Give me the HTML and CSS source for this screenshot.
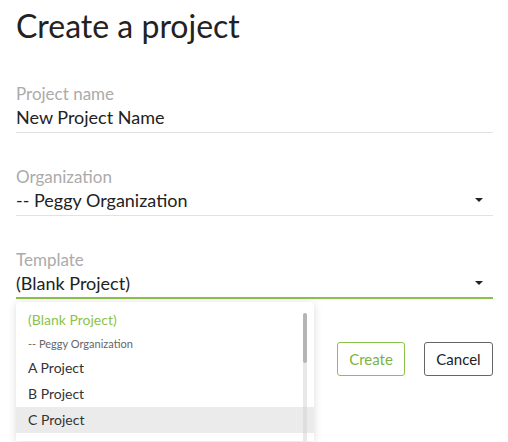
FILE: index.html
```html
<!DOCTYPE html>
<html lang="en">
<head>
<meta charset="UTF-8">
<meta name="viewport" content="width=device-width, initial-scale=1.0">
<title>Create a project</title>
<link rel="stylesheet" href="styles.css">
</head>
<body>

<div class="page">
    <h1>Create a project</h1>

    <div class="field">
        <label>Project name</label>
        <div class="value">New Project Name</div>
    </div>

    <div class="field">
        <label>Organization</label>
        <div class="value">
            <span>-- Peggy Organization</span>
            <span class="caret"></span>
        </div>
    </div>

    <div class="field focused">
        <label>Template</label>
        <div class="value">
            <span>(Blank Project)</span>
            <span class="caret"></span>
        </div>

        <div class="menu">
            <div class="menu-item selected">(Blank Project)</div>
            <div class="menu-group">-- Peggy Organization</div>
            <div class="menu-item">A Project</div>
            <div class="menu-item">B Project</div>
            <div class="menu-item hover">C Project</div>
            <div class="menu-item">Charity Run 2018</div>
            <div class="scrollbar"><div class="thumb"></div></div>
        </div>
    </div>

    <div class="actions">
        <button class="btn primary">Create</button>
        <button class="btn cancel">Cancel</button>
    </div>
</div>

</body>
</html>
```

FILE: styles.css
```css
html, body {
    height: 100%;
}
body {
    font-family: Lato, 'Open Sans', sans-serif;
    margin: 0;
    padding: 0;
    overflow: hidden;
    background-color: #fff;
    color: #222;
}
.page {
    height: 100%;
    padding: 0 15px 0 16px;
}
h1 {
    margin: 0;
    padding-top: 6px;
    font-size: 32px;
    font-weight: 400;
    line-height: 40px;
    color: #222;
}
.field {
    position: relative;
    margin-top: 33px;
    padding-bottom: 3px;
    border-bottom: 1px solid #e2e2e2;
}
h1 + .field {
    margin-top: 37px;
}
.field label {
    display: block;
    font-size: 17px;
    line-height: 22px;
    color: #ababab;
}
.value {
    display: flex;
    align-items: center;
    justify-content: space-between;
    font-size: 18px;
    line-height: 24px;
    color: #222;
}
.caret {
    width: 0;
    height: 0;
    margin-right: 10px;
    border-left: 4px solid transparent;
    border-right: 4px solid transparent;
    border-top: 4px solid #222;
}
.field.focused {
    padding-bottom: 2px;
    border-bottom: 2px solid #8bc34a;
}
.menu {
    position: absolute;
    top: calc(100% + 5px);
    left: 0;
    width: 298px;
    height: 134px;
    padding-top: 5px;
    overflow: hidden;
    background-color: #fff;
    border-radius: 4px 4px 0 0;
    box-shadow: 0 1px 8px rgba(0, 0, 0, 0.14);
    z-index: 2;
}
.menu-item {
    padding-left: 12px;
    font-size: 14px;
    line-height: 26px;
    color: #333;
}
.menu-item.selected {
    color: #8bc34a;
}
.menu-item.hover {
    background-color: #ebebeb;
}
.menu-group {
    padding-left: 12px;
    font-size: 11px;
    line-height: 22px;
    color: #666;
}
.scrollbar {
    position: absolute;
    top: 11px;
    right: 7px;
    bottom: 0;
    width: 4px;
    background-color: rgba(210, 210, 210, 0.5);
    border-radius: 2px 2px 0 0;
}
.thumb {
    height: 50px;
    background-color: #b5b5b5;
    border-radius: 2px;
}
.actions {
    display: flex;
    justify-content: flex-end;
    gap: 19px;
    margin-top: 43px;
}
.btn {
    height: 34px;
    width: 68px;
    padding: 0;
    font-family: Lato, 'Open Sans', sans-serif;
    font-size: 15px;
    color: #222;
    background-color: #fff;
    border: 1px solid #666;
    border-radius: 3px;
    cursor: pointer;
}
.btn.cancel {
    width: 69px;
}
.btn.primary {
    color: #7cb342;
    border-color: #8bc34a;
}
```
